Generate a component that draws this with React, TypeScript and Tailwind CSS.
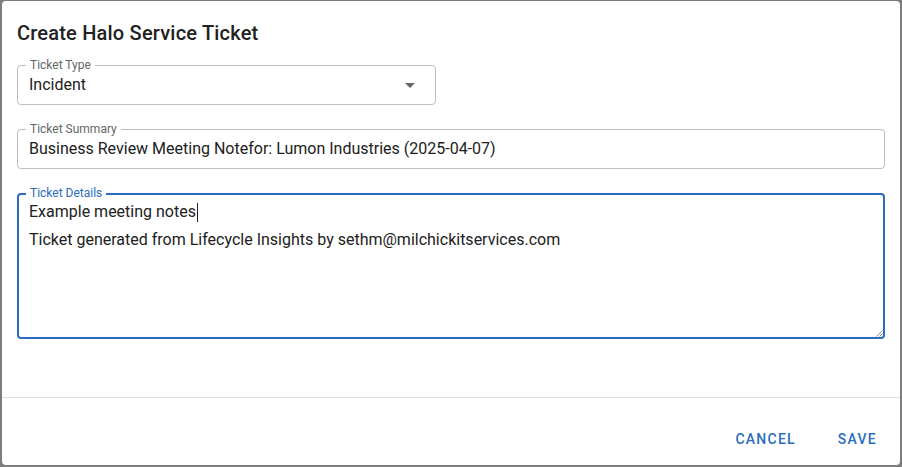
import React from 'react';

function OutlinedLabel({ text, focused }: { text: string; focused?: boolean }) {
  return (
    <span
      className={`absolute -top-2 px-[4px] bg-white text-[12px] leading-[14px] ${
        focused ? 'left-[7px] -top-[9px] text-[#2a6cc0]' : 'left-[8px] text-[#666666]'
      }`}
    >
      {text}
    </span>
  );
}

export default function App() {
  return (
    <div
      className="w-[902px] h-[467px] bg-[#7d7d7d] pt-px pl-[2px] pr-[2px] pb-[2px]"
      style={{ fontFamily: 'Roboto, "Liberation Sans", sans-serif' }}
    >
      <div className="h-full bg-white rounded-[4px] flex flex-col text-[#212121]">
        {/* Title */}
        <h2 className="pt-4 px-[15px] text-[20px] leading-[32px] font-medium tracking-[0.2px]">
          Create Halo Service Ticket
        </h2>

        {/* Fields */}
        <div className="flex-1 px-[15px] pt-4 flex flex-col">
          <div className="relative w-[419px] h-10 border border-[#bdbdbd] rounded-[4px] flex items-center pl-[11px] pr-[13px]">
            <OutlinedLabel text="Ticket Type" />
            <span className="flex-1 text-[16px]">Incident</span>
            <svg viewBox="0 0 24 24" className="w-6 h-6 fill-[#666666]">
              <path d="M7 10l5 5 5-5z" />
            </svg>
          </div>

          <div className="relative mt-6 h-10 border border-[#bdbdbd] rounded-[4px] flex items-center pl-[11px]">
            <OutlinedLabel text="Ticket Summary" />
            <span className="text-[16px]">
              Business Review Meeting Notefor: Lumon Industries (2025-04-07)
            </span>
          </div>

          <div className="relative mt-6 h-[146px] border-2 border-[#2a6cc0] rounded-[4px] pl-[10px] pt-[3px] text-[16px] leading-[28px]">
            <OutlinedLabel text="Ticket Details" focused />
            <div className="flex items-center">
              Example meeting notes
              <span className="ml-px inline-block w-px h-[19px] bg-[#212121]" />
            </div>
            <div>Ticket generated from Lifecycle Insights by sethm@milchickitservices.com</div>
            <svg viewBox="0 0 8 8" className="absolute right-0 bottom-0 w-2 h-2">
              <path d="M7.5 1.5 L1.5 7.5 M7.5 4.5 L4.5 7.5" stroke="#8a8a8a" strokeWidth="1" />
            </svg>
          </div>
        </div>

        {/* Actions */}
        <div className="border-t border-[#e0e0e0] h-[68px] flex justify-end items-start pt-[23px] pr-[15px] gap-[26px]">
          <button className="h-9 px-2 text-[14px] font-medium tracking-[1.25px] text-[#2a6cc0]">
            CANCEL
          </button>
          <button className="h-9 px-2 text-[14px] font-medium tracking-[1.25px] text-[#2a6cc0]">
            SAVE
          </button>
        </div>
      </div>
    </div>
  );
}
